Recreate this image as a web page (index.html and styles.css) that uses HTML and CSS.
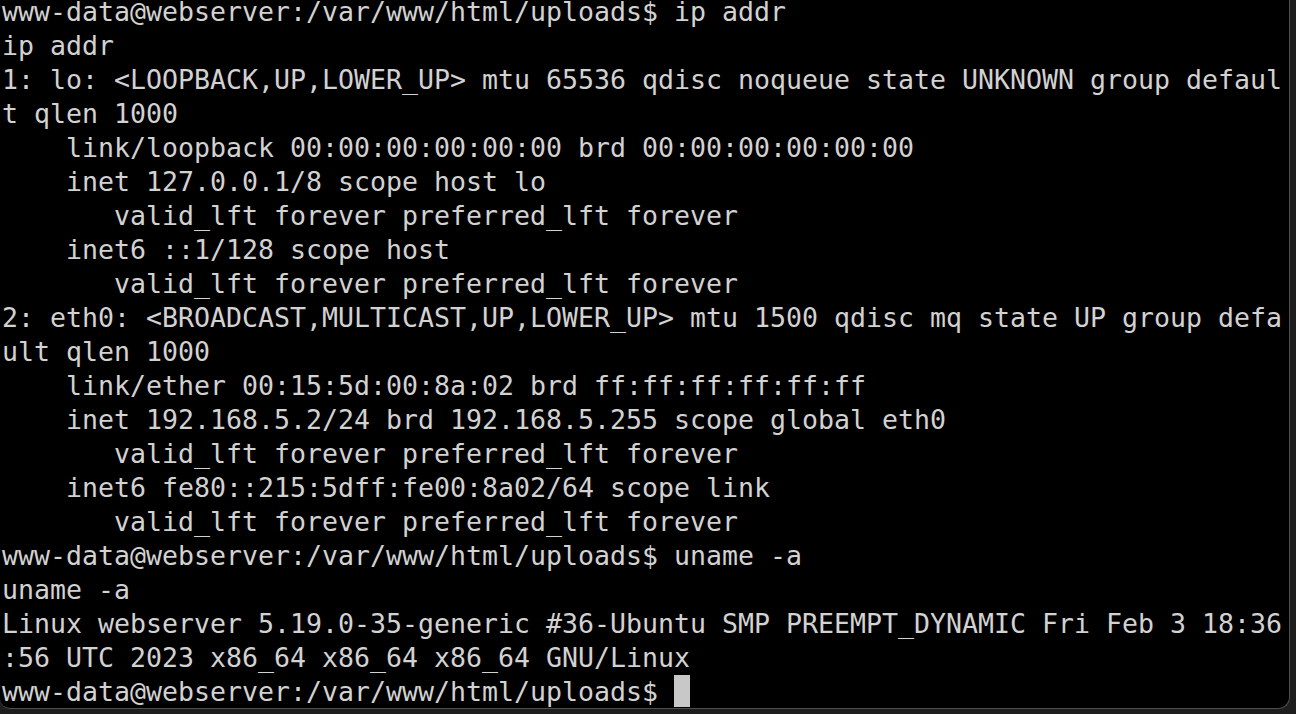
FILE: index.html
```html
<!DOCTYPE html>
<html>
<head>
<meta charset="utf-8">
<link rel="stylesheet" href="styles.css">
</head>
<body>
<div class="window">
<pre class="term">www-data@webserver:/var/www/html/uploads$ ip addr
ip addr
1: lo: &lt;LOOPBACK,UP,LOWER_UP&gt; mtu 65536 qdisc noqueue state UNKNOWN group defaul
t qlen 1000
    link/loopback 00:00:00:00:00:00 brd 00:00:00:00:00:00
    inet 127.0.0.1/8 scope host lo
       valid_lft forever preferred_lft forever
    inet6 ::1/128 scope host
       valid_lft forever preferred_lft forever
2: eth0: &lt;BROADCAST,MULTICAST,UP,LOWER_UP&gt; mtu 1500 qdisc mq state UP group defa
ult qlen 1000
    link/ether 00:15:5d:00:8a:02 brd ff:ff:ff:ff:ff:ff
    inet 192.168.5.2/24 brd 192.168.5.255 scope global eth0
       valid_lft forever preferred_lft forever
    inet6 fe80::215:5dff:fe00:8a02/64 scope link
       valid_lft forever preferred_lft forever
www-data@webserver:/var/www/html/uploads$ uname -a
uname -a
Linux webserver 5.19.0-35-generic #36-Ubuntu SMP PREEMPT_DYNAMIC Fri Feb 3 18:36
:56 UTC 2023 x86_64 x86_64 x86_64 GNU/Linux
www-data@webserver:/var/www/html/uploads$ <span class="cursor"> </span></pre>
</div>
</body>
</html>
```
FILE: styles.css
```css
html, body {
  margin: 0;
  padding: 0;
  background: #1e1e1e;
  width: 1296px;
  height: 714px;
  overflow: hidden;
}
.window {
  width: 1289px;
  height: 708px;
  background: #000;
  border-right: 1px solid #4e4e4e;
  border-bottom: 1px solid #4e4e4e;
  border-bottom-right-radius: 12px;
  border-bottom-left-radius: 10px;
  overflow: hidden;
}
.term {
  margin: -5px 0 0 2px;
  padding: 0;
  font-family: "DejaVu Sans Mono", monospace;
  font-size: 26.58px;
  line-height: 34px;
  color: #d2d2d2;
  white-space: pre;
}
.cursor {
  display: inline-block;
  width: 16px;
  height: 32px;
  background: #c8c8c8;
  vertical-align: top;
  margin-top: 0;
}
```
